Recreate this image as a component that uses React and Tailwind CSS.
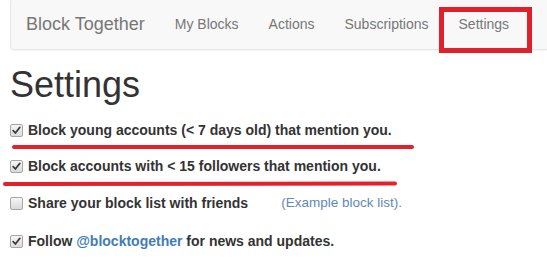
import React from "react";

function Box({ checked }) {
  return (
    <span className="w-[13px] h-[13px] shrink-0 rounded-[2px] border border-[#a6a6a6] bg-gradient-to-b from-[#f6f6f6] to-[#dadada] flex items-center justify-center">
      {checked && (
        <svg width="9" height="9" viewBox="0 0 9 9">
          <path d="M1.2 4.6 L3.4 7 L7.8 1.4" fill="none" stroke="#3a3a3a" strokeWidth="1.7" strokeLinecap="round" strokeLinejoin="round" />
        </svg>
      )}
    </span>
  );
}

export default function App() {
  return (
    <div className="relative w-[547px] h-[272px] overflow-hidden bg-white font-['Liberation_Sans',Arial,sans-serif]">
      <nav className="ml-[10px] -mt-[2px] w-[560px] h-[52px] flex items-center rounded-[4px] border border-[#e7e7e7] bg-[#f8f8f8] shadow-[0_1px_1px_rgba(0,0,0,0.05)]">
        <span className="px-[15px] text-[18px] leading-[20px] text-[#777]">Block Together</span>
        <ul className="flex text-[14px] leading-[20px] text-[#777]">
          <li className="px-[15px]">My Blocks</li>
          <li className="px-[15px]">Actions</li>
          <li className="px-[15px]">Subscriptions</li>
          <li className="px-[15px]">Settings</li>
        </ul>
      </nav>

      <div className="px-[10px]">
        <h1 className="mt-[15px] text-[36px] leading-[40px] text-[#333]">Settings</h1>
        <div className="mt-[15px] flex flex-col text-[14px] leading-[20px] font-bold text-[#333]">
          <div className="flex items-center gap-[5px] h-[20px]">
            <Box checked />
            <span>Block young accounts (&lt; 7 days old) that mention you.</span>
          </div>
          <div className="mt-[16px] flex items-center gap-[5px] h-[20px]">
            <Box checked />
            <span>Block accounts with &lt; 15 followers that mention you.</span>
          </div>
          <div className="mt-[17px] flex items-center gap-[5px] h-[20px]">
            <Box />
            <span>Share your block list with friends</span>
            <span className="ml-[28px] font-normal text-[13.5px] text-[#5f89b5]">(Example block list).</span>
          </div>
          <div className="mt-[18px] flex items-center gap-[5px] h-[20px]">
            <Box checked />
            <span>
              Follow <span className="text-[#3f7cb8]">@blocktogether</span> for news and updates.
            </span>
          </div>
        </div>
      </div>

      <div className="absolute left-[439px] top-[7px] w-[93px] h-[46px] border-[5px] border-[#e0202b]" />
      <svg className="absolute left-0 top-0" width="547" height="272">
        <line x1="14" y1="147" x2="412" y2="147" stroke="#e3212b" strokeWidth="4" strokeLinecap="round" />
        <line x1="5" y1="184" x2="395" y2="183.5" stroke="#e3212b" strokeWidth="4" strokeLinecap="round" />
      </svg>
    </div>
  );
}
